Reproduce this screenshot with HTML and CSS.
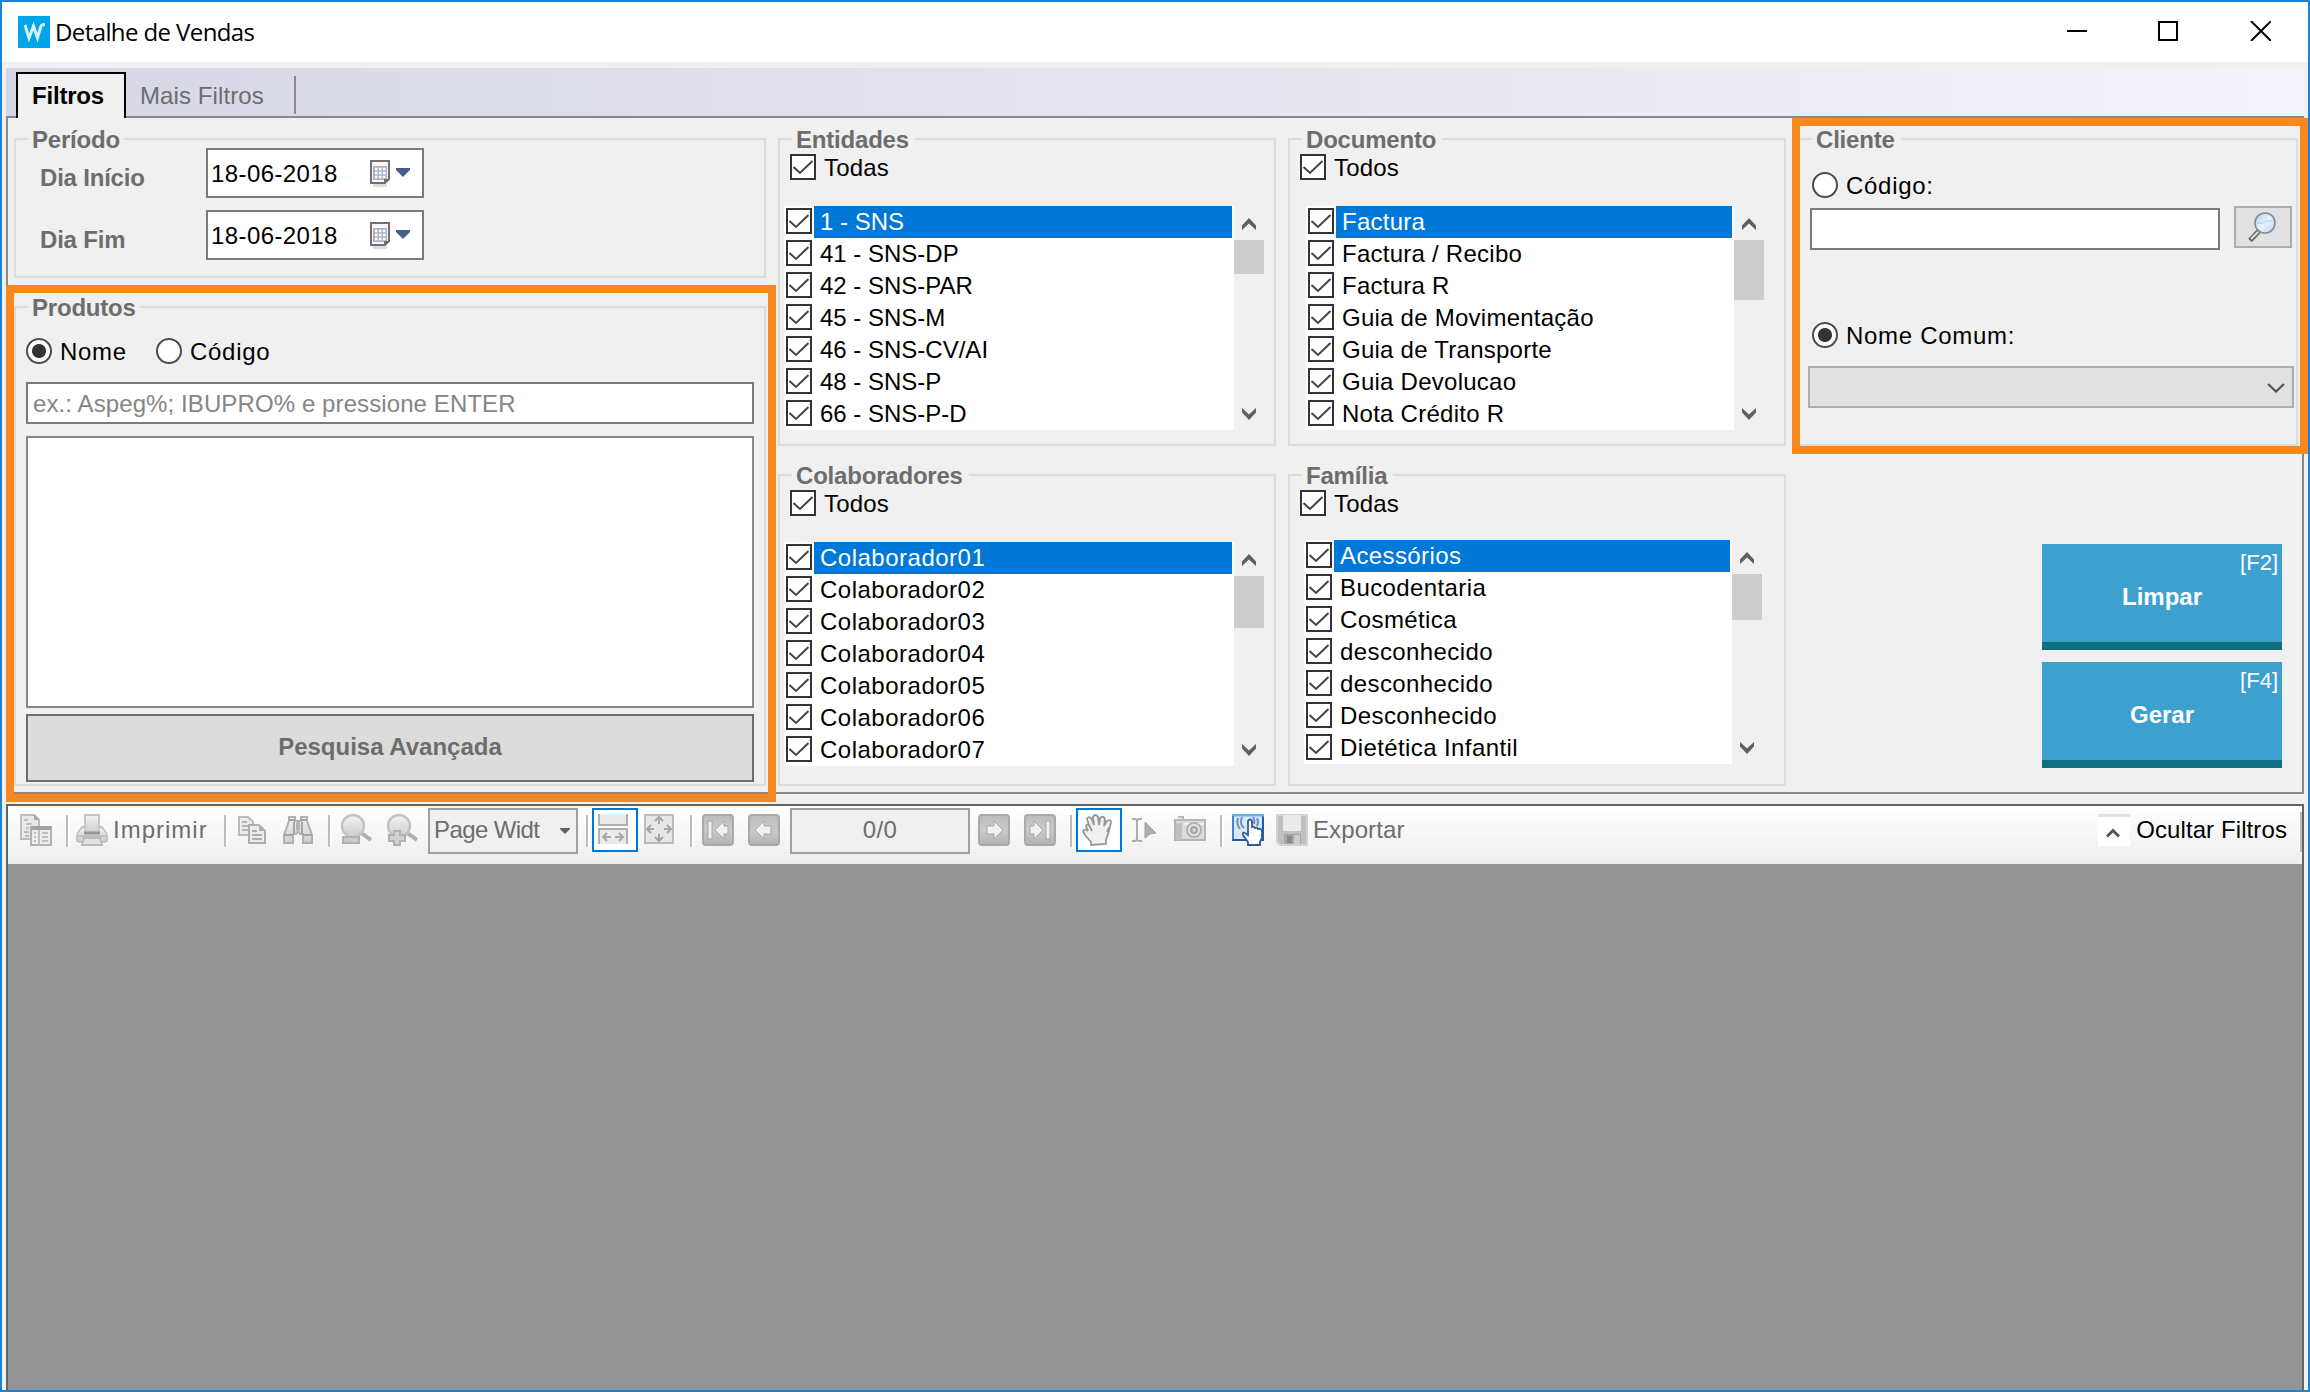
FILE: index.html
```
<!DOCTYPE html>
<html lang="pt">
<head>
    <meta charset="UTF-8">
    <title>Detalhe de Vendas</title>
    <link rel="stylesheet" href="styles.css">
</head>
<body>
    <svg class="defs">
        <defs>
            <linearGradient id="g" x1="0" y1="0" x2="0" y2="1">
                <stop offset="0" stop-color="#f2f2f2"/>
                <stop offset="1" stop-color="#c6c6c6"/>
            </linearGradient>
            <linearGradient id="gd" x1="0" y1="0" x2="0" y2="1">
                <stop offset="0" stop-color="#b2b2b2"/>
                <stop offset=".5" stop-color="#c2c2c2"/>
                <stop offset="1" stop-color="#a8a8a8"/>
            </linearGradient>
            <linearGradient id="gb" x1="0" y1="0" x2="1" y2="1">
                <stop offset="0" stop-color="#a9cdec"/>
                <stop offset=".5" stop-color="#e6f3fd"/>
                <stop offset="1" stop-color="#b9d6f0"/>
            </linearGradient>
        </defs>
        <symbol id="check" viewBox="0 0 26 26">
            <rect x="1" y="1" width="24" height="24" fill="#fff" stroke="#333" stroke-width="2"/>
            <path d="M3.5 13L10 19L22.5 7" fill="none" stroke="#444" stroke-width="2"/>
        </symbol>
        <symbol id="up" viewBox="0 0 14 12">
            <path d="M0 12V7.5L7 0L14 7.5V12L7 5.5Z" fill="#606060"/>
        </symbol>
        <symbol id="down" viewBox="0 0 14 12">
            <path d="M0 0V4.500L7 12L14 4.500V0L7 6.500Z" fill="#606060"/>
        </symbol>
        <symbol id="calendar" viewBox="0 0 42 28">
            <path d="M5 25.500h14" stroke="#dcdcdc" stroke-width="3"/>
            <path d="M3 1h18v18l-4 4H3z" fill="#f7f7f7" stroke="#786c6c" stroke-width="2"/>
            <rect x="5" y="6" width="14" height="14" fill="#aab4c4"/>
            <path d="M7 9h11M7 13h11M7 17h11" stroke="#fff" stroke-width="2.500" stroke-dasharray="2.500 1.500"/>
            <path d="M16 24v-5h6z" fill="#786c6c"/>
            <path d="M28 8H42V10L35 17L28 10Z" fill="#465f88"/>
        </symbol>
    </svg>

    <div class="window">
        <div class="titlebar">
            <div class="logo">
                <svg viewBox="0 0 32 32"><path d="M7 9l4 13l4.500-12l4 12l3.500-12q.5-1.500 4-1.500" fill="none" stroke="#d4f0fc" stroke-width="3"/></svg>
            </div>
            <h1>Detalhe de Vendas</h1>
            <svg class="win-buttons" viewBox="0 0 204 20">
                <path d="M0 10H20" stroke="#000" stroke-width="2"/>
                <rect x="92" y="1" width="18" height="18" fill="none" stroke="#000" stroke-width="2"/>
                <path d="M184 0L204 20M204 0L184 20" stroke="#000" stroke-width="2"/>
            </svg>
        </div>

        <div class="tabs">
            <div class="tab active">Filtros</div>
            <div class="tab">Mais Filtros</div>
            <div class="tab-line"></div>
        </div>

        <div class="filters">
            <div class="column">
                <div class="group periodo">
                    <h2>Período</h2>
                    <div class="date-row">
                        <label>Dia Início</label>
                        <div class="date">18-06-2018 <svg><use href="#calendar"/></svg></div>
                    </div>
                    <div class="date-row">
                        <label>Dia Fim</label>
                        <div class="date">18-06-2018 <svg><use href="#calendar"/></svg></div>
                    </div>
                </div>
                <div class="group produtos highlight">
                    <h2>Produtos</h2>
                    <div class="radios">
                        <span class="radio on"></span><span class="radio-text">Nome</span>
                        <span class="radio"></span><span class="radio-text">Código</span>
                    </div>
                    <div class="search">ex.: Aspeg%; IBUPRO% e pressione ENTER</div>
                    <div class="results"></div>
                    <div class="advanced">Pesquisa Avançada</div>
                </div>
            </div>

            <div class="column">
                <div class="group top">
                    <h2>Entidades</h2>
                    <div class="all"><svg><use href="#check"/></svg>Todas</div>
                    <div class="list entidades">
                        <ul>
                            <li class="selected"><svg><use href="#check"/></svg><span>1 - SNS</span></li>
                            <li><svg><use href="#check"/></svg><span>41 - SNS-DP</span></li>
                            <li><svg><use href="#check"/></svg><span>42 - SNS-PAR</span></li>
                            <li><svg><use href="#check"/></svg><span>45 - SNS-M</span></li>
                            <li><svg><use href="#check"/></svg><span>46 - SNS-CV/AI</span></li>
                            <li><svg><use href="#check"/></svg><span>48 - SNS-P</span></li>
                            <li><svg><use href="#check"/></svg><span>66 - SNS-P-D</span></li>
                        </ul>
                        <div class="scroll"><svg><use href="#up"/></svg><div class="thumb"></div><svg><use href="#down"/></svg></div>
                    </div>
                </div>
                <div class="group bottom">
                    <h2>Colaboradores</h2>
                    <div class="all"><svg><use href="#check"/></svg>Todos</div>
                    <div class="list colaboradores">
                        <ul>
                            <li class="selected"><svg><use href="#check"/></svg><span>Colaborador01</span></li>
                            <li><svg><use href="#check"/></svg><span>Colaborador02</span></li>
                            <li><svg><use href="#check"/></svg><span>Colaborador03</span></li>
                            <li><svg><use href="#check"/></svg><span>Colaborador04</span></li>
                            <li><svg><use href="#check"/></svg><span>Colaborador05</span></li>
                            <li><svg><use href="#check"/></svg><span>Colaborador06</span></li>
                            <li><svg><use href="#check"/></svg><span>Colaborador07</span></li>
                        </ul>
                        <div class="scroll"><svg><use href="#up"/></svg><div class="thumb"></div><svg><use href="#down"/></svg></div>
                    </div>
                </div>
            </div>

            <div class="column">
                <div class="group top">
                    <h2>Documento</h2>
                    <div class="all"><svg><use href="#check"/></svg>Todos</div>
                    <div class="list documento">
                        <ul>
                            <li class="selected"><svg><use href="#check"/></svg><span>Factura</span></li>
                            <li><svg><use href="#check"/></svg><span>Factura / Recibo</span></li>
                            <li><svg><use href="#check"/></svg><span>Factura R</span></li>
                            <li><svg><use href="#check"/></svg><span>Guia de Movimentação</span></li>
                            <li><svg><use href="#check"/></svg><span>Guia de Transporte</span></li>
                            <li><svg><use href="#check"/></svg><span>Guia Devolucao</span></li>
                            <li><svg><use href="#check"/></svg><span>Nota Crédito R</span></li>
                        </ul>
                        <div class="scroll"><svg><use href="#up"/></svg><div class="thumb"></div><svg><use href="#down"/></svg></div>
                    </div>
                </div>
                <div class="group bottom">
                    <h2>Família</h2>
                    <div class="all"><svg><use href="#check"/></svg>Todas</div>
                    <div class="list familia">
                        <ul>
                            <li class="selected"><svg><use href="#check"/></svg><span>Acessórios</span></li>
                            <li><svg><use href="#check"/></svg><span>Bucodentaria</span></li>
                            <li><svg><use href="#check"/></svg><span>Cosmética</span></li>
                            <li><svg><use href="#check"/></svg><span>desconhecido</span></li>
                            <li><svg><use href="#check"/></svg><span>desconhecido</span></li>
                            <li><svg><use href="#check"/></svg><span>Desconhecido</span></li>
                            <li><svg><use href="#check"/></svg><span>Dietética Infantil</span></li>
                        </ul>
                        <div class="scroll"><svg><use href="#up"/></svg><div class="thumb"></div><svg><use href="#down"/></svg></div>
                    </div>
                </div>
            </div>

            <div class="column last">
                <div class="group top cliente highlight">
                    <h2>Cliente</h2>
                    <div class="client-radio"><span class="radio"></span><span class="radio-text">Código:</span></div>
                    <div class="client-code">
                        <div class="code-input"></div>
                        <div class="lookup">
                            <svg viewBox="0 0 28 32">
                                <path d="M2 28.500L11 19" stroke="#666" stroke-width="5"/>
                                <path d="M3 27L10.500 19.500" stroke="#ddd" stroke-width="2"/>
                                <circle cx="17" cy="11" r="10" fill="url(#gb)" stroke="#858a92" stroke-width="1.600"/>
                                <path d="M9 11q5 1 8-1t7-1" fill="none" stroke="#b5d5f0" stroke-width="1.500"/>
                            </svg>
                        </div>
                    </div>
                    <div class="client-radio second"><span class="radio on"></span><span class="radio-text">Nome Comum:</span></div>
                    <div class="combo">
                        <svg viewBox="0 0 18 12"><path d="M1 2L9 9.500L17 2" fill="none" stroke="#505050" stroke-width="2.200"/></svg>
                    </div>
                </div>
                <div class="actions">
                    <div class="action"><kbd>[F2]</kbd>Limpar</div>
                    <div class="action"><kbd>[F4]</kbd>Gerar</div>
                </div>
            </div>
        </div>

        <div class="report">
            <div class="toolbar">
                <!-- group tree -->
                <div class="tool">
                    <svg viewBox="0 0 32 32">
                        <path d="M1 1h13l5 5v19H1z" fill="#e6e6e6" stroke="#b4b4b4" stroke-width="2"/>
                        <path d="M14 0v6h6" fill="#999"/>
                        <path d="M4 6h4M6 10h6M6 14h3M4 18h5M5 22h4" stroke="#b4b4b4" stroke-width="2"/>
                        <rect x="11" y="13" width="20" height="18" fill="#ececec" stroke="#a6a6a6" stroke-width="2"/>
                        <path d="M11 14h20" stroke="#949494" stroke-width="4"/>
                        <path d="M19 16v15M14 19h2M14 23h2M14 27h2M22 19h6M22 23h6M22 27h6" stroke="#b4b4b4" stroke-width="2"/>
                    </svg>
                </div>
                <div class="sep"></div>
                <!-- print -->
                <div class="tool print">
                    <svg viewBox="0 0 32 32">
                        <path d="M6 13L3 17q-2 2-2 5v4q0 2 3 2h24q3 0 3-2v-4q0-3-2-5l-3-4z" fill="url(#g)" stroke="#b0b0b0" stroke-width="1.500"/>
                        <rect x="9" y="1" width="14" height="18" fill="url(#g)" stroke="#bcbcbc" stroke-width="2"/>
                        <path d="M8 19h16" stroke="#858585" stroke-width="3"/>
                        <path d="M8 24h16l2 7H6z" fill="#dedede" stroke="#b0b0b0" stroke-width="2"/>
                        <path d="M2 22h28" stroke="#aaa" stroke-width="1.500"/>
                    </svg>
                    <span>Imprimir</span>
                </div>
                <div class="sep"></div>
                <!-- copy -->
                <div class="tool">
                    <svg viewBox="0 0 32 32">
                        <path d="M3 3h9l5 5v13H3z" fill="#e8e8e8" stroke="#b0b0b0" stroke-width="2"/>
                        <path d="M6 8h5M6 12h7M6 16h7" stroke="#a8a8a8" stroke-width="2"/>
                        <path d="M13 11h10l6 6v12H13z" fill="#eaeaea" stroke="#a2a2a2" stroke-width="2"/>
                        <path d="M23 10v7h7z" fill="#a2a2a2"/>
                        <path d="M16 17h5M16 21h10M16 25h10" stroke="#a2a2a2" stroke-width="2"/>
                    </svg>
                </div>
                <!-- find -->
                <div class="tool">
                    <svg viewBox="0 0 32 32">
                        <path d="M7 3h6v4h6V3h6v4l5 14v8h-9v-9h-3l-2-3-2 3h-3v9H2v-8L7 7z" fill="url(#g)" stroke="#a4a4a4" stroke-width="2"/>
                        <path d="M12 8v12M20 8v12M2 21h9M21 21h9M7 6h6M19 6h6" stroke="#969696" stroke-width="2"/>
                        <rect x="14" y="7" width="4" height="9" fill="#aaa"/>
                    </svg>
                </div>
                <div class="sep"></div>
                <!-- zoom out / in -->
                <div class="tool">
                    <svg viewBox="0 0 32 32">
                        <path d="M20 18L31 26" stroke="#a2a2a2" stroke-width="4"/>
                        <circle cx="13" cy="12" r="11" fill="url(#g)" stroke="#bababa" stroke-width="2.500"/>
                        <rect x="3" y="23" width="16" height="6" fill="#c4c4c4" stroke="#a6a6a6" stroke-width="2"/>
                    </svg>
                </div>
                <div class="tool">
                    <svg viewBox="0 0 32 32">
                        <path d="M20 18L31 26" stroke="#a2a2a2" stroke-width="4"/>
                        <circle cx="13" cy="12" r="11" fill="url(#g)" stroke="#bababa" stroke-width="2.500"/>
                        <path d="M8 17h6v4h5v6h-5v4H8v-4H3v-6h5z" fill="#ccc" stroke="#a6a6a6" stroke-width="2"/>
                    </svg>
                </div>
                <div class="zoom-combo"><span>Page Widt</span><svg viewBox="0 0 10 6"><path d="M0 0H10V1L5 6L0 1Z" fill="#606060"/></svg></div>
                <div class="sep"></div>
                <!-- page width -->
                <div class="tool checked">
                    <svg viewBox="0 0 32 32">
                        <path d="M1 0v11h28V0" fill="#e8e8e8" stroke="#a2a2a2" stroke-width="2"/>
                        <path d="M1 30V15h28v15" fill="#e8e8e8" stroke="#a2a2a2" stroke-width="2"/>
                        <path d="M5 23h8M17 23h8M9 19l-4 4l4 4M21 19l4 4l-4 4" fill="none" stroke="#999" stroke-width="2"/>
                    </svg>
                </div>
                <!-- whole page -->
                <div class="tool">
                    <svg viewBox="0 0 32 32">
                        <rect x="1" y="1" width="28" height="28" fill="#e4e4e4" stroke="#b2b2b2" stroke-width="2"/>
                        <path d="M15 3v7M15 20v7M3 15h7M20 15h7M11 7l4-4l4 4M11 23l4 4l4-4M7 11l-4 4l4 4M23 11l4 4l-4 4" fill="none" stroke="#999" stroke-width="2"/>
                    </svg>
                </div>
                <div class="sep"></div>
                <!-- first / previous page -->
                <div class="tool">
                    <svg viewBox="0 0 32 32">
                        <rect x="1" y="1" width="30" height="30" rx="3" fill="url(#gd)" stroke="#9c9c9c" stroke-width="2"/>
                        <rect x="6" y="7" width="4" height="18" fill="#f0f0f0" stroke="#999"/>
                        <path d="M13 16l9-9v5h4v8h-4v5z" fill="#f0f0f0" stroke="#999"/>
                    </svg>
                </div>
                <div class="tool">
                    <svg viewBox="0 0 32 32">
                        <rect x="1" y="1" width="30" height="30" rx="3" fill="url(#gd)" stroke="#9c9c9c" stroke-width="2"/>
                        <path d="M7 16l9-9v5h7v8h-7v5z" fill="#f0f0f0" stroke="#999"/>
                    </svg>
                </div>
                <div class="page-number">0/0</div>
                <!-- next / last page -->
                <div class="tool">
                    <svg viewBox="0 0 32 32">
                        <rect x="1" y="1" width="30" height="30" rx="3" fill="url(#gd)" stroke="#9c9c9c" stroke-width="2"/>
                        <path d="M25 16l-9-9v5H9v8h7v5z" fill="#f0f0f0" stroke="#999"/>
                    </svg>
                </div>
                <div class="tool">
                    <svg viewBox="0 0 32 32">
                        <rect x="1" y="1" width="30" height="30" rx="3" fill="url(#gd)" stroke="#9c9c9c" stroke-width="2"/>
                        <rect x="22" y="7" width="4" height="18" fill="#f0f0f0" stroke="#999"/>
                        <path d="M19 16l-9-9v5H6v8h4v5z" fill="#f0f0f0" stroke="#999"/>
                    </svg>
                </div>
                <div class="sep"></div>
                <!-- pan -->
                <div class="tool checked">
                    <svg viewBox="0 0 32 32">
                        <path d="M9 31v-3L3 21L1 17q1-2 4-1l1 1L4 12q0-2 3-1L5 5q1-3 4-1l3 7l-1-8q2-4 5 0l1 8l1-7q3-3 5 1l-1 7l3-5q4-2 4 1l-2 9l-3 9v4z" fill="#efefef" stroke="#868686" stroke-width="1.800"/>
                        <path d="M7 11l3 6M27 13l-2 5" stroke="#868686" stroke-width="1.800"/>
                    </svg>
                </div>
                <!-- select text -->
                <div class="tool">
                    <svg viewBox="0 0 32 32">
                        <path d="M4 5h3l2 1l2-1h3M4 27h3l2-1l2 1h3M9 6v20" fill="none" stroke="#a0a0a0" stroke-width="2"/>
                        <path d="M17 8L28 19L22 20L17 24Z" fill="#a2a2a2" stroke="#929292"/>
                    </svg>
                </div>
                <!-- snapshot -->
                <div class="tool">
                    <svg viewBox="0 0 32 32">
                        <path d="M4 3h5v3" fill="none" stroke="#aaa" stroke-width="2"/>
                        <rect x="1" y="6" width="30" height="20" fill="#d6d6d6" stroke="#aaa" stroke-width="2"/>
                        <rect x="2" y="9" width="6" height="17" fill="#b6b6b6"/>
                        <path d="M10 10h20" stroke="#eee" stroke-width="2"/>
                        <circle cx="20" cy="16" r="7" fill="#e4e4e4" stroke="#a4a4a4" stroke-width="2"/>
                        <circle cx="20" cy="16" r="3" fill="#c8c8c8" stroke="#969696" stroke-width="2"/>
                    </svg>
                </div>
                <div class="sep"></div>
                <!-- touch mode -->
                <div class="tool touch">
                    <svg viewBox="0 0 32 32">
                        <rect x="1" y="1" width="30" height="25" fill="#d9e7f7" stroke="#1d5cad" stroke-width="2"/>
                        <path d="M0 1h32" stroke="#61b5ee" stroke-width="3"/>
                        <path d="M1 2v23" stroke="#3f86cf" stroke-width="2"/>
                        <path d="M6 4q-2 6 2 11M10 3q-3 7 2 11M25 4q2 4 0 8M21 3q2 3 1 7" fill="none" stroke="#6c93c9" stroke-width="2"/>
                        <path d="M16 31v-3l-5-7q-1-3 2-2l3 2V7q2-3 4 0v6q2-1 3 1q2-1 3 1q3-1 4 2v7l-2 4v3z" fill="#fff" stroke="#2c5a9c" stroke-width="1.800"/>
                    </svg>
                </div>
                <!-- export -->
                <div class="tool export">
                    <svg viewBox="0 0 32 32">
                        <path d="M1 1h30v30H4l-3-3z" fill="#b6b6b6" stroke="#cdcdcd" stroke-width="2"/>
                        <rect x="7" y="1" width="18" height="16" fill="#e8e8e8"/>
                        <rect x="8" y="20" width="17" height="10" fill="#999"/>
                        <rect x="11" y="22" width="5" height="7" fill="#777"/>
                        <rect x="18" y="21" width="6" height="9" fill="#c6c6c6"/>
                    </svg>
                    <span>Exportar</span>
                </div>
                <div class="hide-filters">
                    <div class="toggle"><svg viewBox="0 0 14 12"><path d="M1 9.500L7 3.500L13 9.500" fill="none" stroke="#555" stroke-width="3"/></svg></div>
                    <span>Ocultar Filtros</span>
                </div>
            </div>
        </div>
    </div>
</body>
</html>
```
FILE: styles.css
```
* {
    box-sizing: border-box;
}
body {
    margin: 0;
    font-family: "Liberation Sans", Arial, sans-serif;
    font-size: 24px;
    line-height: 28px;
    letter-spacing: 0.4px;
    color: #000;
}
svg {
    display: block;
    flex-shrink: 0;
}
.defs {
    position: absolute;
    width: 0;
    height: 0;
}
.window {
    width: 2310px;
    height: 1392px;
    border: 2px solid #1883d7;
    background-color: #f0f0f0;
    display: flex;
    flex-direction: column;
}

/* Title bar */
.titlebar {
    height: 60px;
    padding: 0 37px 0 16px;
    background-color: #fff;
    display: flex;
    align-items: center;
}
.logo {
    width: 32px;
    height: 32px;
    background-color: #00a5e9;
}
.titlebar h1 {
    margin: 0 0 0 5px;
    font-family: "Open Sans", "Noto Sans", sans-serif;
    font-size: 24px;
    font-weight: normal;
    letter-spacing: -0.6px;
}
.win-buttons {
    width: 204px;
    height: 20px;
    margin: -2px 0 0 auto;
}

/* Tabs */
.tabs {
    height: 48px;
    margin: 6px 4px 0;
    padding: 4px 0 0 10px;
    background: linear-gradient(to right, #d7d6e5, #f3f3f9);
    display: flex;
}
.tab {
    padding: 10px 0 0 14px;
    color: #6d6d6d;
    letter-spacing: 0.1px;
}
.tab.active {
    width: 110px;
    height: 46px;
    padding: 8px 0 0 14px;
    border: 2px solid #000;
    border-bottom: none;
    background-color: #f0f0f0;
    color: #000;
    font-weight: bold;
    letter-spacing: -0.2px;
    z-index: 1;
}
.tab-line {
    width: 2px;
    height: 38px;
    margin: 4px 0 0 30px;
    background-color: #888;
}

/* Filter panel */
.filters {
    height: 678px;
    margin: 0 4px;
    padding: 20px 4px 0 6px;
    border: 2px solid #888;
    display: grid;
    grid-template-columns: 752px 498px 498px 500px;
    column-gap: 12px;
}
.group {
    border: 2px solid #dcdcdc;
}
.group h2 {
    width: fit-content;
    margin: -14px 0 0 12px;
    padding: 0 4px;
    background-color: #f0f0f0;
    color: #6d6d6d;
    font-size: 24px;
    font-weight: bold;
    letter-spacing: -0.2px;
}
.highlight {
    position: relative;
}
.highlight::after {
    content: "";
    position: absolute;
    border: 8px solid #f8881f;
    z-index: 2;
}

/* Periodo */
.periodo {
    height: 140px;
    margin-bottom: 28px;
}
.date-row {
    display: flex;
    padding-left: 24px;
    margin-bottom: 12px;
}
.periodo h2 {
    margin-bottom: -6px;
}
.date-row label {
    width: 166px;
    padding-top: 16px;
    color: #6d6d6d;
    font-weight: bold;
    letter-spacing: -0.2px;
}
.date {
    width: 218px;
    height: 50px;
    padding-left: 3px;
    border: 2px solid #7a7a7a;
    background-color: #fff;
    line-height: 47px;
    display: flex;
}
.date svg {
    width: 42px;
    height: 28px;
    margin: 10px 12px 0 auto;
}

/* Produtos */
.produtos {
    height: 480px;
    padding: 0 10px;
}
.produtos h2 {
    margin-left: 2px;
}
.produtos::after {
    left: -10px;
    right: -12px;
    top: -23px;
    bottom: -18px;
}
.radios {
    margin-top: 16px;
    display: flex;
}
.radio {
    width: 26px;
    height: 26px;
    border: 2px solid #4c4c4c;
    border-radius: 50%;
    background-color: #fff;
}
.radio.on {
    background: radial-gradient(circle, #333 6.5px, #fff 7.5px);
}
.radio-text {
    margin-left: 8px;
    letter-spacing: 0.7px;
}
.radios .radio-text {
    width: 96px;
}
.search {
    height: 42px;
    margin-top: 16px;
    padding-left: 5px;
    border: 2px solid #7a7a7a;
    background-color: #fff;
    color: #858585;
    line-height: 39px;
    letter-spacing: 0.1px;
}
.results {
    height: 272px;
    margin-top: 12px;
    border: 2px solid #828790;
    background-color: #fff;
}
.advanced {
    height: 68px;
    margin-top: 6px;
    border: 2px solid #6b6b6b;
    background-color: #dcdcdc;
    color: #6d6d6d;
    font-weight: bold;
    line-height: 62px;
    letter-spacing: 0;
    text-align: center;
}

/* Checked lists */
.top {
    height: 308px;
    margin-bottom: 28px;
}
.top h2, .bottom h2 {
    padding-right: 6px;
}
.bottom {
    height: 312px;
}
.all {
    margin-left: 10px;
    display: flex;
    gap: 8px;
    letter-spacing: 0.2px;
}
.all svg, .list li svg {
    width: 26px;
    height: 26px;
}
.list {
    display: flex;
    margin-top: 24px;
}
.list ul {
    margin: 0;
    padding: 0 2px 0 0;
    background-color: #fff;
    list-style: none;
}
.list li {
    height: 32px;
    padding: 2px 0 0 2px;
    display: flex;
}
.list li span {
    flex: 1;
    height: 32px;
    margin: -2px 0 0 2px;
    padding-left: 6px;
    line-height: 31px;
}
.list .selected span {
    background-color: #0078d7;
    color: #fff;
}
.entidades, .colaboradores {
    margin-left: 4px;
}
.entidades {
    letter-spacing: 0;
}
.colaboradores {
    letter-spacing: 0.5px;
}
.entidades ul, .colaboradores ul {
    width: 450px;
}
.documento {
    margin-left: 16px;
    letter-spacing: 0.25px;
}
.documento ul, .familia ul {
    width: 428px;
}
.list.familia {
    margin: 22px 0 0 14px;
}
.scroll {
    width: 30px;
    height: 224px;
    padding: 12px 0 10px;
    display: flex;
    flex-direction: column;
    align-items: center;
}
.scroll svg {
    width: 14px;
    height: 12px;
}
.scroll svg:last-child {
    margin-top: auto;
}
.thumb {
    width: 30px;
    margin-top: 10px;
    background-color: #cdcdcd;
}
.entidades .thumb {
    height: 34px;
}
.documento .thumb {
    height: 60px;
}
.colaboradores .thumb {
    height: 52px;
}
.familia .thumb {
    height: 46px;
}

/* Cliente */
.cliente {
    margin-bottom: 98px;
}
.cliente::after {
    left: -8px;
    right: -12px;
    top: -22px;
    bottom: -10px;
}
.client-radio {
    margin: 18px 0 0 12px;
    display: flex;
}
.client-code {
    margin: 6px 4px 0 10px;
    display: flex;
    justify-content: space-between;
}
.code-input {
    width: 410px;
    height: 42px;
    margin-top: 2px;
    border: 2px solid #7a7a7a;
    background-color: #fff;
}
.lookup {
    width: 58px;
    height: 42px;
    border: 2px solid #adadad;
    background-color: #e1e1e1;
}
.lookup svg {
    width: 28px;
    height: 32px;
    margin: 4px 0 0 12px;
}
.client-radio.second {
    margin-top: 72px;
}
.combo {
    width: 486px;
    height: 42px;
    margin: 16px 0 0 8px;
    border: 2px solid #adadad;
    background-color: #e1e1e1;
}
.combo svg {
    width: 18px;
    height: 12px;
    margin: 14px 7px 0 auto;
}

/* Action buttons */
.actions {
    margin: 0 16px 0 auto;
    width: 240px;
    display: flex;
    flex-direction: column;
    gap: 12px;
}
.action {
    height: 106px;
    border-bottom: 8px solid #116d80;
    background-color: #3da0cf;
    color: #fff;
    font-weight: bold;
    letter-spacing: 0;
    text-align: center;
}
.action kbd {
    display: block;
    padding: 5px 4px 0 0;
    font-family: inherit;
    font-size: 22px;
    font-weight: normal;
    text-align: right;
    margin-bottom: 6px;
}

/* Report viewer */
.report {
    flex: 1;
    margin: 10px 4px 0;
    border: 2px solid #646464;
    border-bottom: none;
    background-color: #949494;
}
.toolbar {
    height: 58px;
    padding: 2px 0 0 6px;
    background: linear-gradient(to bottom, #fff, #eee);
    color: #6d6d6d;
    display: flex;
}
.tool {
    width: 46px;
    height: 44px;
    padding: 4px;
    border: 2px solid transparent;
    display: flex;
}
.tool svg {
    width: 32px;
    height: 32px;
    opacity: 0.85;
}
.tool.touch svg {
    opacity: 1;
}
.tool.checked {
    border-color: #0078d7;
    background-color: #fff;
}
.tool span {
    margin: 2px 0 0 5px;
}
.tool.print {
    width: 148px;
    margin-left: -2px;
    letter-spacing: 1px;
}
.tool.export {
    width: 150px;
    margin-left: -2px;
    letter-spacing: 0.1px;
}
.sep {
    width: 4px;
    height: 32px;
    margin: 7px 2px 0 6px;
    border-left: 2px solid #bdbdbd;
    border-right: 2px solid #fff;
}
.zoom-combo {
    width: 150px;
    height: 46px;
    margin: 0 2px;
    padding-left: 4px;
    border: 2px solid #a0a0a0;
    background-color: #f0f0f0;
    line-height: 40px;
    letter-spacing: -0.6px;
    display: flex;
    align-items: center;
}
.zoom-combo span {
    width: 106px;
    margin-top: -2px;
    overflow: hidden;
    white-space: nowrap;
}
.zoom-combo svg {
    width: 10px;
    height: 6px;
    margin-left: 20px;
}
.page-number {
    width: 180px;
    height: 46px;
    margin: 0 2px;
    border: 2px solid #a0a0a0;
    background-color: #f0f0f0;
    line-height: 40px;
    text-align: center;
}
.hide-filters {
    height: 40px;
    margin: 4px 0 0 auto;
    padding-right: 13px;
    border-right: 2px solid #bbb;
    color: #000;
    display: flex;
}
.hide-filters span {
    margin: 4px 0 0 6px;
    letter-spacing: 0.1px;
}
.toggle {
    width: 32px;
    height: 32px;
    margin-top: 2px;
    border-top: 3px solid #e2e2e2;
    background-color: #fff;
}
.toggle svg {
    width: 14px;
    height: 12px;
    margin: 10px 0 0 8px;
}
```
